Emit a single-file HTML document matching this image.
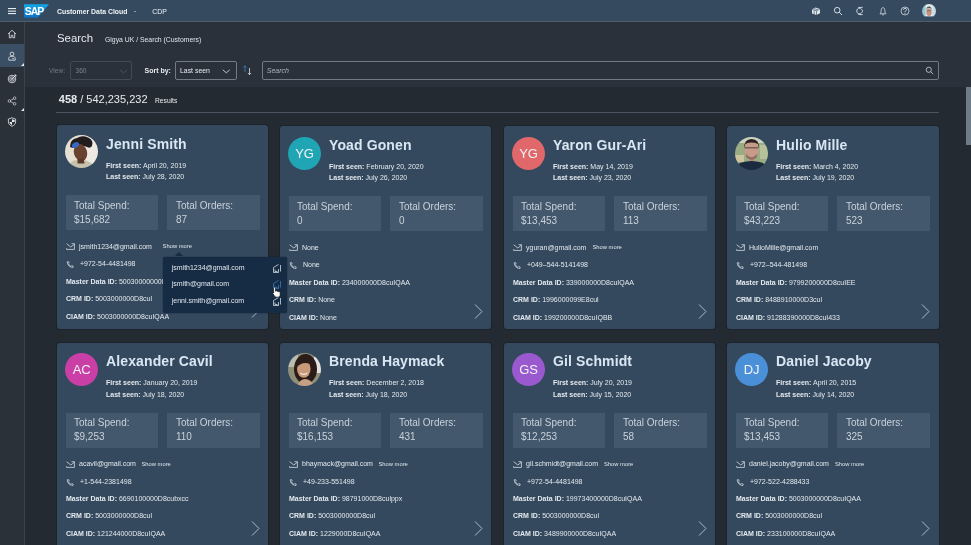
<!DOCTYPE html>
<html><head><meta charset="utf-8"><style>
html,body{margin:0;padding:0;width:971px;height:545px;overflow:hidden;background:#242a31;font-family:"Liberation Sans", sans-serif;}
.t{position:absolute;white-space:nowrap;font-family:"Liberation Sans", sans-serif;}
#root{position:absolute;left:0;top:0;width:971px;height:545px;will-change:transform;}
b{font-weight:700;}
</style></head><body><div id="root">
<div style="position:absolute;left:0px;top:22px;width:971px;height:523px;background:#242a31;"></div>
<div style="position:absolute;left:25px;top:22px;width:946px;height:65px;background:#2a313a;"></div>
<div style="position:absolute;left:0px;top:0px;width:971px;height:21px;background:#354a5f;"></div>
<div style="position:absolute;left:0px;top:21px;width:971px;height:1px;background:#4d5d6c;"></div>
<div style="position:absolute;left:0px;top:22px;width:24px;height:523px;background:#2a3139;"></div>
<div style="position:absolute;left:24px;top:22px;width:1px;height:523px;background:#3a434d;"></div>
<div style="position:absolute;left:0px;top:44px;width:24px;height:23px;background:#3b4f64;"></div>
<svg style="position:absolute;left:8px;top:8px" width="8" height="7" viewBox="0 0 8 7"><rect x="0" y="0" width="8" height="1.1" fill="#e6ebf0"/><rect x="0" y="2.6" width="8" height="1.1" fill="#e6ebf0"/><rect x="0" y="5" width="8" height="1.1" fill="#e6ebf0"/></svg>
<svg style="position:absolute;left:24px;top:4px" width="26" height="14" viewBox="0 0 26 14"><defs><linearGradient id="sg" x1="0" y1="0" x2="0" y2="1"><stop offset="0" stop-color="#12a7ec"/><stop offset="1" stop-color="#0f6fc0"/></linearGradient></defs><polygon points="0,0.2 25,0.2 13.8,13.8 0,13.8" fill="url(#sg)"/><text x="0.8" y="10.8" font-family="Liberation Sans" font-weight="700" font-size="10.5" fill="#fff" letter-spacing="-1.1" transform="scale(1 1)">SAP</text></svg>
<div class="t" style="left:57.0px;top:9.00px;font-size:6.9px;line-height:6.9px;color:#eef2f5;font-weight:700;">Customer Data Cloud</div>
<div style="position:absolute;left:134.3px;top:10.6px;width:0;height:0;border-left:1.6px solid transparent;border-right:1.6px solid transparent;border-top:1.8px solid #e6ebf0"></div>
<div class="t" style="left:152.2px;top:9.00px;font-size:6.9px;line-height:6.9px;color:#eef2f5;font-weight:400;">CDP</div>
<svg style="position:absolute;left:811px;top:5.6px" width="10" height="10" viewBox="0 0 10 10" fill="none" stroke="#e6ebf0" stroke-width="0.9"><path d="M1 3.2 L4.5 1.5 L9 3 V7.2 L5.5 9 L1 7.4 Z" fill="#dfe6ec" stroke="none"/><path d="M1 3.2 L5.5 4.8 L9 3 M5.5 4.8 V9 M3.2 2.4 L7 4 M3.2 4 V8.2" stroke="#354a5f" stroke-width="0.6"/></svg>
<svg style="position:absolute;left:832.5px;top:5.6px" width="10" height="10" viewBox="0 0 10 10" fill="none" stroke="#e6ebf0" stroke-width="0.9"><circle cx="4.2" cy="4.2" r="2.8"/><path d="M6.2 6.2 L9 9"/></svg>
<svg style="position:absolute;left:855px;top:5.6px" width="10" height="10" viewBox="0 0 10 10" fill="none" stroke="#e6ebf0" stroke-width="0.9"><path d="M7.6 1.4 C3.4 0.9 1.8 3.3 1.8 5 C1.8 6.7 3.4 9.1 7.6 8.6"/><path d="M3.2 1.6 C6.6 2.8 7.6 3.9 7.6 5 C7.6 6.1 6.6 7.2 3.2 8.4" stroke-width="0.8"/></svg>
<svg style="position:absolute;left:877.5px;top:5.6px" width="10" height="10" viewBox="0 0 10 10" fill="none" stroke="#e6ebf0" stroke-width="0.9"><path d="M2 7.8 C2.8 7 3.2 6 3.2 4.5 C3.2 2.8 4 1.6 5 1.6 C6 1.6 6.8 2.8 6.8 4.5 C6.8 6 7.2 7 8 7.8 Z" stroke-width="0.75"/><path d="M4.3 8.8 H5.7" stroke-width="0.9"/></svg>
<svg style="position:absolute;left:900px;top:5.6px" width="10" height="10" viewBox="0 0 10 10" fill="none" stroke="#e6ebf0" stroke-width="0.9"><circle cx="5" cy="5" r="4" stroke-width="0.7"/><path d="M3.5 3.9 Q3.5 2.3 5 2.3 Q6.5 2.3 6.5 3.7 Q6.5 4.6 5.5 5 Q5 5.2 5 6.2" stroke-width="0.8"/><circle cx="5" cy="7.5" r="0.5" fill="#e6ebf0" stroke="none"/></svg>
<svg style="position:absolute;left:922px;top:4px" width="14" height="14" viewBox="0 0 14 14"><defs><clipPath id="ha"><circle cx="7" cy="7" r="7"/></clipPath><filter id="hb"><feGaussianBlur stdDeviation="0.45"/></filter></defs><g clip-path="url(#ha)"><g filter="url(#hb)"><rect width="14" height="14" fill="#dde9ee"/><rect x="0" y="0" width="3.5" height="14" fill="#8fc6cf"/><rect x="10.5" y="0" width="3.5" height="14" fill="#c7dbe6"/><ellipse cx="7" cy="8.2" rx="2.6" ry="3.8" fill="#c78f7c"/><path d="M4.2 6 Q4.4 2.4 7 2.4 Q9.6 2.4 9.8 6 L9 4.4 Q7 3.6 5 4.4 Z" fill="#5b5350"/><rect x="4.6" y="6.4" width="4.8" height="0.7" fill="#6f5f5a"/><rect x="3" y="12.4" width="8" height="2" fill="#3b4a5a"/></g></g></svg>
<svg style="position:absolute;left:7px;top:28.799999999999997px" width="10" height="10" viewBox="0 0 10 10" fill="none" stroke="#e6ebf0" stroke-width="0.8"><path d="M1 5 L5 1.3 L9 5 M2.3 4 V8.8 H4.2 V6.3 H5.8 V8.8 H7.7 V4"/></svg>
<svg style="position:absolute;left:7px;top:51.3px" width="10" height="10" viewBox="0 0 10 10" fill="none" stroke="#e6ebf0" stroke-width="0.8"><circle cx="5" cy="3" r="1.9"/><path d="M1.8 9.2 V7.3 C1.8 6 3 5.3 5 5.3 C7 5.3 8.2 6 8.2 7.3 V9.2 Z"/><path d="M5.2 7.7 H7" /></svg>
<svg style="position:absolute;left:7px;top:73.5px" width="10" height="10" viewBox="0 0 10 10" fill="none" stroke="#e6ebf0" stroke-width="0.8"><circle cx="5" cy="5" r="3.8"/><circle cx="5" cy="5" r="2.2"/><circle cx="5" cy="5" r="0.6"/><path d="M5 5 L9 1 M7.5 1 H9 V2.5"/></svg>
<svg style="position:absolute;left:7px;top:95.5px" width="10" height="10" viewBox="0 0 10 10" fill="none" stroke="#e6ebf0" stroke-width="0.8"><circle cx="2.4" cy="5" r="1.3" stroke-width="0.65"/><circle cx="7.6" cy="2.2" r="1.3" stroke-width="0.65"/><circle cx="7.6" cy="7.8" r="1.3" stroke-width="0.65"/><path d="M3.5 4.4 L6.5 2.8 M3.5 5.6 L6.5 7.2" stroke-width="0.65"/></svg>
<svg style="position:absolute;left:7px;top:117px" width="10" height="10" viewBox="0 0 10 10" fill="none" stroke="#e6ebf0" stroke-width="0.8"><path d="M5 0.8 L8.6 2 V5 C8.6 7 7 8.5 5 9.3 C3 8.5 1.4 7 1.4 5 V2 Z"/><path d="M5 2.2 L7.6 3 V5 H5 Z M5 5 V8 C3.8 7.5 2.8 6.5 2.5 5 H5 Z" fill="#e6ebf0" stroke="none"/></svg>
<div style="position:absolute;left:21px;top:63px;width:0;height:0;border-left:3px solid transparent;border-bottom:3px solid #e6ebf0"></div>
<div style="position:absolute;left:21px;top:108px;width:0;height:0;border-left:3px solid transparent;border-bottom:3px solid #e6ebf0"></div>
<div class="t" style="left:57.0px;top:33.00px;font-size:11.4px;line-height:11.4px;color:#e6ebf0;font-weight:400;">Search</div>
<div class="t" style="left:105.0px;top:37.00px;font-size:6.85px;line-height:6.85px;color:#dfe5ea;font-weight:400;">Gigya UK / Search (Customers)</div>
<div class="t" style="left:49.0px;top:68.00px;font-size:6.6px;line-height:6.6px;color:#6f7a85;font-weight:400;">View:</div>
<div style="position:absolute;left:70px;top:61px;width:62px;height:19px;box-sizing:border-box;border:1px solid #434b54;border-radius:2px;"></div>
<div class="t" style="left:75.5px;top:68.00px;font-size:6.6px;line-height:6.6px;color:#7a838c;font-weight:400;">360</div>
<svg style="position:absolute;left:119px;top:68.5px" width="9" height="5" viewBox="0 0 9 5"><path d="M1 1 L4.5 4 L8 1" fill="none" stroke="#505a64" stroke-width="0.8"/></svg>
<div class="t" style="left:144.5px;top:67.00px;font-size:7px;line-height:7px;color:#e6ebf0;font-weight:400;"><b>Sort by:</b></div>
<div style="position:absolute;left:175px;top:61px;width:62px;height:19px;box-sizing:border-box;border:1px solid #717b85;border-radius:2px;"></div>
<div class="t" style="left:180.0px;top:68.00px;font-size:6.9px;line-height:6.9px;color:#e6ebf0;font-weight:400;">Last seen</div>
<svg style="position:absolute;left:222px;top:68.8px" width="9" height="5" viewBox="0 0 9 5"><path d="M0.8 0.8 L4.3 3.8 L7.8 0.8" fill="none" stroke="#e6ebf0" stroke-width="0.8"/></svg>
<svg style="position:absolute;left:241px;top:64px" width="12" height="12" viewBox="0 0 12 12" fill="none" stroke-width="0.75"><path d="M4 8 V1.8 M2.4 3.4 L4 1.8 L5.6 3.4" stroke="#3f86d6"/><path d="M8.5 4 V10.6 M6.9 9 L8.5 10.6 L10.1 9" stroke="#e6ebf0"/></svg>
<div style="position:absolute;left:262px;top:61px;width:677px;height:19px;box-sizing:border-box;border:1px solid #717b85;border-radius:2px;"></div>
<div class="t" style="left:266.8px;top:67.00px;font-size:7px;line-height:7px;color:#aab3bb;font-weight:400;"><i>Search</i></div>
<svg style="position:absolute;left:925px;top:65.8px" width="9" height="9" viewBox="0 0 9 9" fill="none" stroke="#c9d1d8" stroke-width="0.8"><circle cx="3.8" cy="3.8" r="2.6"/><path d="M5.7 5.7 L8.2 8.2"/></svg>
<div class="t" style="left:58.8px;top:94.00px;font-size:11px;line-height:11px;color:#e6ebf0;font-weight:400;"><b>458</b> / 542,235,232</div>
<div class="t" style="left:155.0px;top:98.00px;font-size:6.7px;line-height:6.7px;color:#e6ebf0;font-weight:400;">Results</div>
<div style="position:absolute;left:56px;top:112px;width:883px;height:1px;background:#4a5561;"></div>
<div style="position:absolute;left:966px;top:87px;width:5px;height:58px;background:#6e7b88;"></div>
<div style="position:absolute;left:57px;top:125px;width:211px;height:204px;background:#34495e;border-radius:3px;box-shadow:0 0 0 1px rgba(22,30,38,0.55);"></div>
<svg style="position:absolute;left:65px;top:135px" width="33" height="33" viewBox="0 0 33 33"><defs><clipPath id="cf65135"><circle cx="16.5" cy="16.5" r="16.5"/></clipPath><filter id="f65135" x="-10%" y="-10%" width="120%" height="120%"><feGaussianBlur stdDeviation="0.7"/></filter></defs><g clip-path="url(#cf65135)"><g filter="url(#f65135)"><rect width="33" height="33" fill="#e6e0d4"/><rect x="21" y="0" width="12" height="33" fill="#eeeae3"/><path d="M5 12 Q5 4 12 3 Q17 0 23 2.5 Q29 5 27 11 Q25 14 22 12 Q18 10 14 12 Q9 14 5 12 Z" fill="#231c1a"/><path d="M2 33 Q5 25 12 25 Q20 23.5 28 29 L29 33 Z" fill="#c6c2ab"/><ellipse cx="15.5" cy="17.5" rx="6.6" ry="8.6" transform="rotate(-15 15.5 17.5)" fill="#6b412d"/><path d="M12.5 24 L18.5 23 L19.5 28.5 L12.5 28.5 Z" fill="#5d3828"/><ellipse cx="10.5" cy="10" rx="3.8" ry="2.6" transform="rotate(-30 10.5 10)" fill="#3466c8"/></g></g></svg>
<div class="t" style="left:106.0px;top:137.00px;font-size:14px;line-height:14px;color:#d9e7f4;font-weight:700;letter-spacing:0.12px;">Jenni Smith</div>
<div class="t" style="left:106.0px;top:162.00px;font-size:7px;line-height:7px;color:#e4e9ee;font-weight:400;"><b>First seen:</b> April 20, 2019</div>
<div class="t" style="left:106.0px;top:173.00px;font-size:7px;line-height:7px;color:#e4e9ee;font-weight:400;"><b>Last seen:</b> July 28, 2020</div>
<div style="position:absolute;left:66px;top:195px;width:92px;height:35px;background:#43586d;"></div>
<div style="position:absolute;left:167px;top:195px;width:93px;height:35px;background:#43586d;"></div>
<div class="t" style="left:74.3px;top:201.00px;font-size:10.4px;line-height:10.4px;color:#c9d2db;font-weight:400;transform:scaleX(0.96);transform-origin:0 0;">Total Spend:</div>
<div class="t" style="left:74.3px;top:215.00px;font-size:10.4px;line-height:10.4px;color:#c9d2db;font-weight:400;transform:scaleX(0.96);transform-origin:0 0;">$15,682</div>
<div class="t" style="left:175.5px;top:201.00px;font-size:10.4px;line-height:10.4px;color:#c9d2db;font-weight:400;transform:scaleX(0.96);transform-origin:0 0;">Total Orders:</div>
<div class="t" style="left:175.5px;top:215.00px;font-size:10.4px;line-height:10.4px;color:#c9d2db;font-weight:400;transform:scaleX(0.96);transform-origin:0 0;">87</div>
<svg style="position:absolute;left:66px;top:243.3px" width="9" height="7" viewBox="0 0 9 7" fill="none" stroke="#dfe6ec" stroke-width="0.75"><path d="M0.6 0.7 L4.8 4 L8.4 1.2 M5.5 0.7 H8.4 V6.4 H0.6 V5.2"/></svg>
<div class="t" style="left:79.0px;top:243.00px;font-size:7px;line-height:7px;color:#e4e9ee;font-weight:400;">jsmith1234@gmail.com</div>
<svg style="position:absolute;left:66px;top:260.8px" width="8" height="7" viewBox="0 0 8 7" fill="none" stroke="#dfe6ec" stroke-width="0.7"><path d="M1.2 0.8 L2.6 0.6 L3.2 2.2 L2.4 2.9 C2.9 4 3.8 4.9 4.9 5.3 L5.7 4.5 L7.2 5.1 L7 6.5 C3.8 6.5 1.2 4 1.2 0.8 Z"/></svg>
<div class="t" style="left:80.0px;top:260.00px;font-size:7px;line-height:7px;color:#e4e9ee;font-weight:400;">+972-54-4481498</div>
<div class="t" style="left:66.0px;top:278.00px;font-size:7px;line-height:7px;color:#e4e9ee;font-weight:400;"><b>Master Data ID:</b> 50030000000D8cuIQAA</div>
<div class="t" style="left:66.0px;top:295.00px;font-size:7px;line-height:7px;color:#e4e9ee;font-weight:400;"><b>CRM ID:</b> 5003000000D8cul</div>
<div class="t" style="left:66.0px;top:313.00px;font-size:7px;line-height:7px;color:#e4e9ee;font-weight:400;"><b>CIAM ID:</b> 5003000000D8cuIQAA</div>
<svg style="position:absolute;left:251px;top:303.2px" width="9" height="15" viewBox="0 0 9 15" fill="none" stroke="#a9b9c8" stroke-width="1"><path d="M1 0.5 L8 7.5 L1 14.5"/></svg>
<div style="position:absolute;left:280px;top:126px;width:211px;height:203px;background:#34495e;border-radius:3px;box-shadow:0 0 0 1px rgba(22,30,38,0.55);"></div>
<div style="position:absolute;left:288px;top:137px;width:33px;height:33px;border-radius:50%;background:#1fa5b3;"></div>
<div class="t" style="left:288.0px;top:147.00px;font-size:13px;line-height:13px;color:#f2f4f6;font-weight:400;width:33px;text-align:center;letter-spacing:-0.2px;">YG</div>
<div class="t" style="left:329.0px;top:138.00px;font-size:14px;line-height:14px;color:#d9e7f4;font-weight:700;letter-spacing:0.12px;">Yoad Gonen</div>
<div class="t" style="left:329.0px;top:163.00px;font-size:7px;line-height:7px;color:#e4e9ee;font-weight:400;"><b>First seen:</b> February 20, 2020</div>
<div class="t" style="left:329.0px;top:174.00px;font-size:7px;line-height:7px;color:#e4e9ee;font-weight:400;"><b>Last seen:</b> July 26, 2020</div>
<div style="position:absolute;left:289px;top:196px;width:92px;height:35px;background:#43586d;"></div>
<div style="position:absolute;left:390px;top:196px;width:93px;height:35px;background:#43586d;"></div>
<div class="t" style="left:297.3px;top:202.00px;font-size:10.4px;line-height:10.4px;color:#c9d2db;font-weight:400;transform:scaleX(0.96);transform-origin:0 0;">Total Spend:</div>
<div class="t" style="left:297.3px;top:216.00px;font-size:10.4px;line-height:10.4px;color:#c9d2db;font-weight:400;transform:scaleX(0.96);transform-origin:0 0;">0</div>
<div class="t" style="left:398.5px;top:202.00px;font-size:10.4px;line-height:10.4px;color:#c9d2db;font-weight:400;transform:scaleX(0.96);transform-origin:0 0;">Total Orders:</div>
<div class="t" style="left:398.5px;top:216.00px;font-size:10.4px;line-height:10.4px;color:#c9d2db;font-weight:400;transform:scaleX(0.96);transform-origin:0 0;">0</div>
<svg style="position:absolute;left:289px;top:244.3px" width="9" height="7" viewBox="0 0 9 7" fill="none" stroke="#dfe6ec" stroke-width="0.75"><path d="M0.6 0.7 L4.8 4 L8.4 1.2 M5.5 0.7 H8.4 V6.4 H0.6 V5.2"/></svg>
<div class="t" style="left:302.0px;top:244.00px;font-size:7px;line-height:7px;color:#e4e9ee;font-weight:400;">None</div>
<svg style="position:absolute;left:289px;top:261.8px" width="8" height="7" viewBox="0 0 8 7" fill="none" stroke="#dfe6ec" stroke-width="0.7"><path d="M1.2 0.8 L2.6 0.6 L3.2 2.2 L2.4 2.9 C2.9 4 3.8 4.9 4.9 5.3 L5.7 4.5 L7.2 5.1 L7 6.5 C3.8 6.5 1.2 4 1.2 0.8 Z"/></svg>
<div class="t" style="left:303.0px;top:261.00px;font-size:7px;line-height:7px;color:#e4e9ee;font-weight:400;">None</div>
<div class="t" style="left:289.0px;top:279.00px;font-size:7px;line-height:7px;color:#e4e9ee;font-weight:400;"><b>Master Data ID:</b> 234000000D8cuIQAA</div>
<div class="t" style="left:289.0px;top:296.00px;font-size:7px;line-height:7px;color:#e4e9ee;font-weight:400;"><b>CRM ID:</b> None</div>
<div class="t" style="left:289.0px;top:314.00px;font-size:7px;line-height:7px;color:#e4e9ee;font-weight:400;"><b>CIAM ID:</b> None</div>
<svg style="position:absolute;left:474px;top:304.2px" width="9" height="15" viewBox="0 0 9 15" fill="none" stroke="#a9b9c8" stroke-width="1"><path d="M1 0.5 L8 7.5 L1 14.5"/></svg>
<div style="position:absolute;left:504px;top:126px;width:211px;height:203px;background:#34495e;border-radius:3px;box-shadow:0 0 0 1px rgba(22,30,38,0.55);"></div>
<div style="position:absolute;left:512px;top:137px;width:33px;height:33px;border-radius:50%;background:#e0686a;"></div>
<div class="t" style="left:512.0px;top:147.00px;font-size:13px;line-height:13px;color:#f2f4f6;font-weight:400;width:33px;text-align:center;letter-spacing:-0.2px;">YG</div>
<div class="t" style="left:553.0px;top:138.00px;font-size:14px;line-height:14px;color:#d9e7f4;font-weight:700;letter-spacing:0.12px;">Yaron Gur-Ari</div>
<div class="t" style="left:553.0px;top:163.00px;font-size:7px;line-height:7px;color:#e4e9ee;font-weight:400;"><b>First seen:</b> May 14, 2019</div>
<div class="t" style="left:553.0px;top:174.00px;font-size:7px;line-height:7px;color:#e4e9ee;font-weight:400;"><b>Last seen:</b> July 23, 2020</div>
<div style="position:absolute;left:513px;top:196px;width:92px;height:35px;background:#43586d;"></div>
<div style="position:absolute;left:614px;top:196px;width:93px;height:35px;background:#43586d;"></div>
<div class="t" style="left:521.3px;top:202.00px;font-size:10.4px;line-height:10.4px;color:#c9d2db;font-weight:400;transform:scaleX(0.96);transform-origin:0 0;">Total Spend:</div>
<div class="t" style="left:521.3px;top:216.00px;font-size:10.4px;line-height:10.4px;color:#c9d2db;font-weight:400;transform:scaleX(0.96);transform-origin:0 0;">$13,453</div>
<div class="t" style="left:622.5px;top:202.00px;font-size:10.4px;line-height:10.4px;color:#c9d2db;font-weight:400;transform:scaleX(0.96);transform-origin:0 0;">Total Orders:</div>
<div class="t" style="left:622.5px;top:216.00px;font-size:10.4px;line-height:10.4px;color:#c9d2db;font-weight:400;transform:scaleX(0.96);transform-origin:0 0;">113</div>
<svg style="position:absolute;left:513px;top:244.3px" width="9" height="7" viewBox="0 0 9 7" fill="none" stroke="#dfe6ec" stroke-width="0.75"><path d="M0.6 0.7 L4.8 4 L8.4 1.2 M5.5 0.7 H8.4 V6.4 H0.6 V5.2"/></svg>
<div class="t" style="left:526.0px;top:244.00px;font-size:7px;line-height:7px;color:#e4e9ee;font-weight:400;">yguran@gmail.com</div>
<svg style="position:absolute;left:513px;top:261.8px" width="8" height="7" viewBox="0 0 8 7" fill="none" stroke="#dfe6ec" stroke-width="0.7"><path d="M1.2 0.8 L2.6 0.6 L3.2 2.2 L2.4 2.9 C2.9 4 3.8 4.9 4.9 5.3 L5.7 4.5 L7.2 5.1 L7 6.5 C3.8 6.5 1.2 4 1.2 0.8 Z"/></svg>
<div class="t" style="left:527.0px;top:261.00px;font-size:7px;line-height:7px;color:#e4e9ee;font-weight:400;">+049–544-5141498</div>
<div class="t" style="left:513.0px;top:279.00px;font-size:7px;line-height:7px;color:#e4e9ee;font-weight:400;"><b>Master Data ID:</b> 339000000D8cuIQAA</div>
<div class="t" style="left:513.0px;top:296.00px;font-size:7px;line-height:7px;color:#e4e9ee;font-weight:400;"><b>CRM ID:</b> 1996000099E8cul</div>
<div class="t" style="left:513.0px;top:314.00px;font-size:7px;line-height:7px;color:#e4e9ee;font-weight:400;"><b>CIAM ID:</b> 199200000D8cuIQBB</div>
<svg style="position:absolute;left:698px;top:304.2px" width="9" height="15" viewBox="0 0 9 15" fill="none" stroke="#a9b9c8" stroke-width="1"><path d="M1 0.5 L8 7.5 L1 14.5"/></svg>
<div style="position:absolute;left:727px;top:126px;width:212px;height:203px;background:#34495e;border-radius:3px;box-shadow:0 0 0 1px rgba(22,30,38,0.55);"></div>
<svg style="position:absolute;left:735px;top:136.5px" width="33" height="33" viewBox="0 0 33 33"><defs><clipPath id="cf735136_5"><circle cx="16.5" cy="16.5" r="16.5"/></clipPath><filter id="f735136_5" x="-10%" y="-10%" width="120%" height="120%"><feGaussianBlur stdDeviation="0.7"/></filter></defs><g clip-path="url(#cf735136_5)"><g filter="url(#f735136_5)"><rect width="33" height="33" fill="#9aac84"/><rect x="0" y="0" width="33" height="6" fill="#cdd2c0"/><rect x="25" y="8" width="8" height="14" fill="#b5c29a"/><rect x="0" y="18" width="9" height="7" fill="#cdc59e"/><rect x="14" y="19" width="5.5" height="6" fill="#b88a78"/><ellipse cx="16.6" cy="12.8" rx="7.3" ry="9.6" fill="#c89a88"/><path d="M9.2 12 Q8.6 2 16.6 2 Q24.6 2 24 12 L23 7 Q16.6 4.2 10.2 7 Z" fill="#2b2320"/><rect x="10" y="10.2" width="13.2" height="1.2" fill="#4a3f3c" opacity="0.8"/><path d="M11 16.5 Q16.6 24 22.2 16.5 L21.8 20.5 Q16.6 24.8 11.4 20.5 Z" fill="#5a4038" opacity="0.5"/><path d="M0 33 L0 29 Q5 24.5 16.6 24 Q28 24.5 33 29 L33 33 Z" fill="#1f2b40"/></g></g></svg>
<div class="t" style="left:776.0px;top:138.00px;font-size:14px;line-height:14px;color:#d9e7f4;font-weight:700;letter-spacing:0.12px;">Hulio Mille</div>
<div class="t" style="left:776.0px;top:163.00px;font-size:7px;line-height:7px;color:#e4e9ee;font-weight:400;"><b>First seen:</b> March 4, 2020</div>
<div class="t" style="left:776.0px;top:174.00px;font-size:7px;line-height:7px;color:#e4e9ee;font-weight:400;"><b>Last seen:</b> July 19, 2020</div>
<div style="position:absolute;left:736px;top:196px;width:92px;height:35px;background:#43586d;"></div>
<div style="position:absolute;left:837px;top:196px;width:93px;height:35px;background:#43586d;"></div>
<div class="t" style="left:744.3px;top:202.00px;font-size:10.4px;line-height:10.4px;color:#c9d2db;font-weight:400;transform:scaleX(0.96);transform-origin:0 0;">Total Spend:</div>
<div class="t" style="left:744.3px;top:216.00px;font-size:10.4px;line-height:10.4px;color:#c9d2db;font-weight:400;transform:scaleX(0.96);transform-origin:0 0;">$43,223</div>
<div class="t" style="left:845.5px;top:202.00px;font-size:10.4px;line-height:10.4px;color:#c9d2db;font-weight:400;transform:scaleX(0.96);transform-origin:0 0;">Total Orders:</div>
<div class="t" style="left:845.5px;top:216.00px;font-size:10.4px;line-height:10.4px;color:#c9d2db;font-weight:400;transform:scaleX(0.96);transform-origin:0 0;">523</div>
<svg style="position:absolute;left:736px;top:244.3px" width="9" height="7" viewBox="0 0 9 7" fill="none" stroke="#dfe6ec" stroke-width="0.75"><path d="M0.6 0.7 L4.8 4 L8.4 1.2 M5.5 0.7 H8.4 V6.4 H0.6 V5.2"/></svg>
<div class="t" style="left:749.0px;top:244.00px;font-size:7px;line-height:7px;color:#e4e9ee;font-weight:400;">HulioMille@gmail.com</div>
<svg style="position:absolute;left:736px;top:261.8px" width="8" height="7" viewBox="0 0 8 7" fill="none" stroke="#dfe6ec" stroke-width="0.7"><path d="M1.2 0.8 L2.6 0.6 L3.2 2.2 L2.4 2.9 C2.9 4 3.8 4.9 4.9 5.3 L5.7 4.5 L7.2 5.1 L7 6.5 C3.8 6.5 1.2 4 1.2 0.8 Z"/></svg>
<div class="t" style="left:750.0px;top:261.00px;font-size:7px;line-height:7px;color:#e4e9ee;font-weight:400;">+972–544-481498</div>
<div class="t" style="left:736.0px;top:279.00px;font-size:7px;line-height:7px;color:#e4e9ee;font-weight:400;"><b>Master Data ID:</b> 9799200000D8cuIEE</div>
<div class="t" style="left:736.0px;top:296.00px;font-size:7px;line-height:7px;color:#e4e9ee;font-weight:400;"><b>CRM ID:</b> 8488910000D3cul</div>
<div class="t" style="left:736.0px;top:314.00px;font-size:7px;line-height:7px;color:#e4e9ee;font-weight:400;"><b>CIAM ID:</b> 91288390000D8cuI433</div>
<svg style="position:absolute;left:921px;top:304.2px" width="9" height="15" viewBox="0 0 9 15" fill="none" stroke="#a9b9c8" stroke-width="1"><path d="M1 0.5 L8 7.5 L1 14.5"/></svg>
<div style="position:absolute;left:57px;top:343px;width:211px;height:210px;background:#34495e;border-radius:3px;box-shadow:0 0 0 1px rgba(22,30,38,0.55);"></div>
<div style="position:absolute;left:65px;top:353px;width:33px;height:33px;border-radius:50%;background:#c93fa6;"></div>
<div class="t" style="left:65.0px;top:363.00px;font-size:13px;line-height:13px;color:#f2f4f6;font-weight:400;width:33px;text-align:center;letter-spacing:-0.2px;">AC</div>
<div class="t" style="left:106.0px;top:354.00px;font-size:14px;line-height:14px;color:#d9e7f4;font-weight:700;letter-spacing:0.12px;">Alexander Cavil</div>
<div class="t" style="left:106.0px;top:379.00px;font-size:7px;line-height:7px;color:#e4e9ee;font-weight:400;"><b>First seen:</b> January 20, 2019</div>
<div class="t" style="left:106.0px;top:391.00px;font-size:7px;line-height:7px;color:#e4e9ee;font-weight:400;"><b>Last seen:</b> July 18, 2020</div>
<div style="position:absolute;left:66px;top:413px;width:92px;height:35px;background:#43586d;"></div>
<div style="position:absolute;left:167px;top:413px;width:93px;height:35px;background:#43586d;"></div>
<div class="t" style="left:74.3px;top:418.00px;font-size:10.4px;line-height:10.4px;color:#c9d2db;font-weight:400;transform:scaleX(0.96);transform-origin:0 0;">Total Spend:</div>
<div class="t" style="left:74.3px;top:432.00px;font-size:10.4px;line-height:10.4px;color:#c9d2db;font-weight:400;transform:scaleX(0.96);transform-origin:0 0;">$9,253</div>
<div class="t" style="left:175.5px;top:418.00px;font-size:10.4px;line-height:10.4px;color:#c9d2db;font-weight:400;transform:scaleX(0.96);transform-origin:0 0;">Total Orders:</div>
<div class="t" style="left:175.5px;top:432.00px;font-size:10.4px;line-height:10.4px;color:#c9d2db;font-weight:400;transform:scaleX(0.96);transform-origin:0 0;">110</div>
<svg style="position:absolute;left:66px;top:460.6px" width="9" height="7" viewBox="0 0 9 7" fill="none" stroke="#dfe6ec" stroke-width="0.75"><path d="M0.6 0.7 L4.8 4 L8.4 1.2 M5.5 0.7 H8.4 V6.4 H0.6 V5.2"/></svg>
<div class="t" style="left:79.0px;top:460.00px;font-size:7px;line-height:7px;color:#e4e9ee;font-weight:400;">acavil@gmail.com</div>
<svg style="position:absolute;left:66px;top:478.8px" width="8" height="7" viewBox="0 0 8 7" fill="none" stroke="#dfe6ec" stroke-width="0.7"><path d="M1.2 0.8 L2.6 0.6 L3.2 2.2 L2.4 2.9 C2.9 4 3.8 4.9 4.9 5.3 L5.7 4.5 L7.2 5.1 L7 6.5 C3.8 6.5 1.2 4 1.2 0.8 Z"/></svg>
<div class="t" style="left:80.0px;top:478.00px;font-size:7px;line-height:7px;color:#e4e9ee;font-weight:400;">+1-544-2381498</div>
<div class="t" style="left:66.0px;top:495.00px;font-size:7px;line-height:7px;color:#e4e9ee;font-weight:400;"><b>Master Data ID:</b> 6690100000D8cubxcc</div>
<div class="t" style="left:66.0px;top:512.00px;font-size:7px;line-height:7px;color:#e4e9ee;font-weight:400;"><b>CRM ID:</b> 5003000000D8cul</div>
<div class="t" style="left:66.0px;top:530.00px;font-size:7px;line-height:7px;color:#e4e9ee;font-weight:400;"><b>CIAM ID:</b> 121244000D8cuIQAA</div>
<svg style="position:absolute;left:251px;top:520.5px" width="9" height="15" viewBox="0 0 9 15" fill="none" stroke="#a9b9c8" stroke-width="1"><path d="M1 0.5 L8 7.5 L1 14.5"/></svg>
<div style="position:absolute;left:280px;top:343px;width:211px;height:210px;background:#34495e;border-radius:3px;box-shadow:0 0 0 1px rgba(22,30,38,0.55);"></div>
<svg style="position:absolute;left:288px;top:353px" width="33" height="33" viewBox="0 0 33 33"><defs><clipPath id="cf288353"><circle cx="16.5" cy="16.5" r="16.5"/></clipPath><filter id="f288353" x="-10%" y="-10%" width="120%" height="120%"><feGaussianBlur stdDeviation="0.7"/></filter></defs><g clip-path="url(#cf288353)"><g filter="url(#f288353)"><rect width="33" height="33" fill="#8e8f79"/><rect x="0" y="0" width="10" height="14" fill="#b9bcae"/><rect x="26" y="4" width="7" height="16" fill="#e4e2dc"/><ellipse cx="17.5" cy="16" rx="11.5" ry="15" fill="#2a1b15"/><path d="M9 33 Q12 26 17 26 Q23 26 26 33 Z" fill="#c8a084"/><ellipse cx="15.8" cy="15.8" rx="6.8" ry="9" fill="#c89a7a"/><path d="M8.8 12 Q12 4 19 4.5 Q24 6 22 11 Q15 8 8.8 14 Z" fill="#2a1b15"/><path d="M12.5 20 Q15.8 22.8 19.2 20" stroke="#f3e6dc" stroke-width="1.3" fill="none"/></g></g></svg>
<div class="t" style="left:329.0px;top:354.00px;font-size:14px;line-height:14px;color:#d9e7f4;font-weight:700;letter-spacing:0.12px;">Brenda Haymack</div>
<div class="t" style="left:329.0px;top:379.00px;font-size:7px;line-height:7px;color:#e4e9ee;font-weight:400;"><b>First seen:</b> December 2, 2018</div>
<div class="t" style="left:329.0px;top:391.00px;font-size:7px;line-height:7px;color:#e4e9ee;font-weight:400;"><b>Last seen:</b> July 18, 2020</div>
<div style="position:absolute;left:289px;top:413px;width:92px;height:35px;background:#43586d;"></div>
<div style="position:absolute;left:390px;top:413px;width:93px;height:35px;background:#43586d;"></div>
<div class="t" style="left:297.3px;top:418.00px;font-size:10.4px;line-height:10.4px;color:#c9d2db;font-weight:400;transform:scaleX(0.96);transform-origin:0 0;">Total Spend:</div>
<div class="t" style="left:297.3px;top:432.00px;font-size:10.4px;line-height:10.4px;color:#c9d2db;font-weight:400;transform:scaleX(0.96);transform-origin:0 0;">$16,153</div>
<div class="t" style="left:398.5px;top:418.00px;font-size:10.4px;line-height:10.4px;color:#c9d2db;font-weight:400;transform:scaleX(0.96);transform-origin:0 0;">Total Orders:</div>
<div class="t" style="left:398.5px;top:432.00px;font-size:10.4px;line-height:10.4px;color:#c9d2db;font-weight:400;transform:scaleX(0.96);transform-origin:0 0;">431</div>
<svg style="position:absolute;left:289px;top:460.6px" width="9" height="7" viewBox="0 0 9 7" fill="none" stroke="#dfe6ec" stroke-width="0.75"><path d="M0.6 0.7 L4.8 4 L8.4 1.2 M5.5 0.7 H8.4 V6.4 H0.6 V5.2"/></svg>
<div class="t" style="left:302.0px;top:460.00px;font-size:7px;line-height:7px;color:#e4e9ee;font-weight:400;">bhaymack@gmail.com</div>
<svg style="position:absolute;left:289px;top:478.8px" width="8" height="7" viewBox="0 0 8 7" fill="none" stroke="#dfe6ec" stroke-width="0.7"><path d="M1.2 0.8 L2.6 0.6 L3.2 2.2 L2.4 2.9 C2.9 4 3.8 4.9 4.9 5.3 L5.7 4.5 L7.2 5.1 L7 6.5 C3.8 6.5 1.2 4 1.2 0.8 Z"/></svg>
<div class="t" style="left:303.0px;top:478.00px;font-size:7px;line-height:7px;color:#e4e9ee;font-weight:400;">+49-233-551498</div>
<div class="t" style="left:289.0px;top:495.00px;font-size:7px;line-height:7px;color:#e4e9ee;font-weight:400;"><b>Master Data ID:</b> 98791000D8culppx</div>
<div class="t" style="left:289.0px;top:512.00px;font-size:7px;line-height:7px;color:#e4e9ee;font-weight:400;"><b>CRM ID:</b> 5003000000D8cul</div>
<div class="t" style="left:289.0px;top:530.00px;font-size:7px;line-height:7px;color:#e4e9ee;font-weight:400;"><b>CIAM ID:</b> 1229000D8cuIQAA</div>
<svg style="position:absolute;left:474px;top:520.5px" width="9" height="15" viewBox="0 0 9 15" fill="none" stroke="#a9b9c8" stroke-width="1"><path d="M1 0.5 L8 7.5 L1 14.5"/></svg>
<div style="position:absolute;left:504px;top:343px;width:211px;height:210px;background:#34495e;border-radius:3px;box-shadow:0 0 0 1px rgba(22,30,38,0.55);"></div>
<div style="position:absolute;left:512px;top:353px;width:33px;height:33px;border-radius:50%;background:#9b59d0;"></div>
<div class="t" style="left:512.0px;top:363.00px;font-size:13px;line-height:13px;color:#f2f4f6;font-weight:400;width:33px;text-align:center;letter-spacing:-0.2px;">GS</div>
<div class="t" style="left:553.0px;top:354.00px;font-size:14px;line-height:14px;color:#d9e7f4;font-weight:700;letter-spacing:0.12px;">Gil Schmidt</div>
<div class="t" style="left:553.0px;top:379.00px;font-size:7px;line-height:7px;color:#e4e9ee;font-weight:400;"><b>First seen:</b> July 20, 2019</div>
<div class="t" style="left:553.0px;top:391.00px;font-size:7px;line-height:7px;color:#e4e9ee;font-weight:400;"><b>Last seen:</b> July 15, 2020</div>
<div style="position:absolute;left:513px;top:413px;width:92px;height:35px;background:#43586d;"></div>
<div style="position:absolute;left:614px;top:413px;width:93px;height:35px;background:#43586d;"></div>
<div class="t" style="left:521.3px;top:418.00px;font-size:10.4px;line-height:10.4px;color:#c9d2db;font-weight:400;transform:scaleX(0.96);transform-origin:0 0;">Total Spend:</div>
<div class="t" style="left:521.3px;top:432.00px;font-size:10.4px;line-height:10.4px;color:#c9d2db;font-weight:400;transform:scaleX(0.96);transform-origin:0 0;">$12,253</div>
<div class="t" style="left:622.5px;top:418.00px;font-size:10.4px;line-height:10.4px;color:#c9d2db;font-weight:400;transform:scaleX(0.96);transform-origin:0 0;">Total Orders:</div>
<div class="t" style="left:622.5px;top:432.00px;font-size:10.4px;line-height:10.4px;color:#c9d2db;font-weight:400;transform:scaleX(0.96);transform-origin:0 0;">58</div>
<svg style="position:absolute;left:513px;top:460.6px" width="9" height="7" viewBox="0 0 9 7" fill="none" stroke="#dfe6ec" stroke-width="0.75"><path d="M0.6 0.7 L4.8 4 L8.4 1.2 M5.5 0.7 H8.4 V6.4 H0.6 V5.2"/></svg>
<div class="t" style="left:526.0px;top:460.00px;font-size:7px;line-height:7px;color:#e4e9ee;font-weight:400;">gil.schmidt@gmail.com</div>
<svg style="position:absolute;left:513px;top:478.8px" width="8" height="7" viewBox="0 0 8 7" fill="none" stroke="#dfe6ec" stroke-width="0.7"><path d="M1.2 0.8 L2.6 0.6 L3.2 2.2 L2.4 2.9 C2.9 4 3.8 4.9 4.9 5.3 L5.7 4.5 L7.2 5.1 L7 6.5 C3.8 6.5 1.2 4 1.2 0.8 Z"/></svg>
<div class="t" style="left:527.0px;top:478.00px;font-size:7px;line-height:7px;color:#e4e9ee;font-weight:400;">+972-54-4481498</div>
<div class="t" style="left:513.0px;top:495.00px;font-size:7px;line-height:7px;color:#e4e9ee;font-weight:400;"><b>Master Data ID:</b> 19973400000D8cuIQAA</div>
<div class="t" style="left:513.0px;top:512.00px;font-size:7px;line-height:7px;color:#e4e9ee;font-weight:400;"><b>CRM ID:</b> 5003000000D8cul</div>
<div class="t" style="left:513.0px;top:530.00px;font-size:7px;line-height:7px;color:#e4e9ee;font-weight:400;"><b>CIAM ID:</b> 3489900000D8cuIQAA</div>
<svg style="position:absolute;left:698px;top:520.5px" width="9" height="15" viewBox="0 0 9 15" fill="none" stroke="#a9b9c8" stroke-width="1"><path d="M1 0.5 L8 7.5 L1 14.5"/></svg>
<div style="position:absolute;left:727px;top:343px;width:212px;height:210px;background:#34495e;border-radius:3px;box-shadow:0 0 0 1px rgba(22,30,38,0.55);"></div>
<div style="position:absolute;left:735px;top:353px;width:33px;height:33px;border-radius:50%;background:#4a90d9;"></div>
<div class="t" style="left:735.0px;top:363.00px;font-size:13px;line-height:13px;color:#f2f4f6;font-weight:400;width:33px;text-align:center;letter-spacing:-0.2px;">DJ</div>
<div class="t" style="left:776.0px;top:354.00px;font-size:14px;line-height:14px;color:#d9e7f4;font-weight:700;letter-spacing:0.12px;">Daniel Jacoby</div>
<div class="t" style="left:776.0px;top:379.00px;font-size:7px;line-height:7px;color:#e4e9ee;font-weight:400;"><b>First seen:</b> April 20, 2015</div>
<div class="t" style="left:776.0px;top:391.00px;font-size:7px;line-height:7px;color:#e4e9ee;font-weight:400;"><b>Last seen:</b> July 14, 2020</div>
<div style="position:absolute;left:736px;top:413px;width:92px;height:35px;background:#43586d;"></div>
<div style="position:absolute;left:837px;top:413px;width:93px;height:35px;background:#43586d;"></div>
<div class="t" style="left:744.3px;top:418.00px;font-size:10.4px;line-height:10.4px;color:#c9d2db;font-weight:400;transform:scaleX(0.96);transform-origin:0 0;">Total Spend:</div>
<div class="t" style="left:744.3px;top:432.00px;font-size:10.4px;line-height:10.4px;color:#c9d2db;font-weight:400;transform:scaleX(0.96);transform-origin:0 0;">$13,453</div>
<div class="t" style="left:845.5px;top:418.00px;font-size:10.4px;line-height:10.4px;color:#c9d2db;font-weight:400;transform:scaleX(0.96);transform-origin:0 0;">Total Orders:</div>
<div class="t" style="left:845.5px;top:432.00px;font-size:10.4px;line-height:10.4px;color:#c9d2db;font-weight:400;transform:scaleX(0.96);transform-origin:0 0;">325</div>
<svg style="position:absolute;left:736px;top:460.6px" width="9" height="7" viewBox="0 0 9 7" fill="none" stroke="#dfe6ec" stroke-width="0.75"><path d="M0.6 0.7 L4.8 4 L8.4 1.2 M5.5 0.7 H8.4 V6.4 H0.6 V5.2"/></svg>
<div class="t" style="left:749.0px;top:460.00px;font-size:7px;line-height:7px;color:#e4e9ee;font-weight:400;">daniel.jacoby@gmail.com</div>
<svg style="position:absolute;left:736px;top:478.8px" width="8" height="7" viewBox="0 0 8 7" fill="none" stroke="#dfe6ec" stroke-width="0.7"><path d="M1.2 0.8 L2.6 0.6 L3.2 2.2 L2.4 2.9 C2.9 4 3.8 4.9 4.9 5.3 L5.7 4.5 L7.2 5.1 L7 6.5 C3.8 6.5 1.2 4 1.2 0.8 Z"/></svg>
<div class="t" style="left:750.0px;top:478.00px;font-size:7px;line-height:7px;color:#e4e9ee;font-weight:400;">+972-522-4288433</div>
<div class="t" style="left:736.0px;top:495.00px;font-size:7px;line-height:7px;color:#e4e9ee;font-weight:400;"><b>Master Data ID:</b> 5003000000D8cuIQAA</div>
<div class="t" style="left:736.0px;top:512.00px;font-size:7px;line-height:7px;color:#e4e9ee;font-weight:400;"><b>CRM ID:</b> 5003000000D8cul</div>
<div class="t" style="left:736.0px;top:530.00px;font-size:7px;line-height:7px;color:#e4e9ee;font-weight:400;"><b>CIAM ID:</b> 233100000D8cuIQAA</div>
<svg style="position:absolute;left:921px;top:520.5px" width="9" height="15" viewBox="0 0 9 15" fill="none" stroke="#a9b9c8" stroke-width="1"><path d="M1 0.5 L8 7.5 L1 14.5"/></svg>
<div class="t" style="left:162.6px;top:244.00px;font-size:5.8px;line-height:5.8px;color:#dfe6ec;font-weight:400;">Show more</div>
<div class="t" style="left:592.5px;top:245.00px;font-size:5.8px;line-height:5.8px;color:#dfe6ec;font-weight:400;">Show more</div>
<div class="t" style="left:141.5px;top:462.00px;font-size:5.8px;line-height:5.8px;color:#dfe6ec;font-weight:400;">Show more</div>
<div class="t" style="left:378.5px;top:462.00px;font-size:5.8px;line-height:5.8px;color:#dfe6ec;font-weight:400;">Show more</div>
<div class="t" style="left:604.0px;top:462.00px;font-size:5.8px;line-height:5.8px;color:#dfe6ec;font-weight:400;">Show more</div>
<div class="t" style="left:835.0px;top:462.00px;font-size:5.8px;line-height:5.8px;color:#dfe6ec;font-weight:400;">Show more</div>
<div style="position:absolute;left:163px;top:256.5px;width:124px;height:56px;background:#162b44;border-radius:2px;box-shadow:0 0 1.5px rgba(0,0,0,0.5);"></div>
<div style="position:absolute;left:175px;top:252px;width:0;height:0;border-left:4.5px solid transparent;border-right:4.5px solid transparent;border-bottom:4.5px solid #162b44"></div>
<div class="t" style="left:171.7px;top:264.00px;font-size:7px;line-height:7px;color:#e4e9ee;font-weight:400;">jsmith1234@gmail.com</div>
<div class="t" style="left:171.7px;top:280.00px;font-size:7px;line-height:7px;color:#e4e9ee;font-weight:400;">jsmith@gmail.com</div>
<div class="t" style="left:171.7px;top:297.00px;font-size:7px;line-height:7px;color:#e4e9ee;font-weight:400;">jenni.smith@gmail.com</div>
<svg style="position:absolute;left:273px;top:263.5px" width="9" height="9" viewBox="0 0 9 9" fill="none" stroke="#dfe6ec" stroke-width="0.75"><path d="M0.5 3.5 L5.5 0.5 M0.5 3.5 V8.5 H5.5 V5 M2 5.5 V7.5 H4.5" /><path d="M7.5 1 V7.5"/></svg>
<svg style="position:absolute;left:273px;top:280px" width="9" height="9" viewBox="0 0 9 9" fill="none" stroke="#3d7cc9" stroke-width="0.75"><path d="M0.5 3.5 L5.5 0.5 M0.5 3.5 V8.5 H5.5 V5 M2 5.5 V7.5 H4.5" /><path d="M7.5 1 V7.5"/></svg>
<svg style="position:absolute;left:273px;top:296.5px" width="9" height="9" viewBox="0 0 9 9" fill="none" stroke="#dfe6ec" stroke-width="0.75"><path d="M0.5 3.5 L5.5 0.5 M0.5 3.5 V8.5 H5.5 V5 M2 5.5 V7.5 H4.5" /><path d="M7.5 1 V7.5"/></svg>
<svg style="position:absolute;left:272px;top:286px" width="12" height="12" viewBox="0 0 12 12"><path d="M2.6 1 C3.2 1 3.6 1.4 3.6 2 V5.2 L4 4.9 C4.5 4.6 5.2 4.8 5.4 5.3 C5.9 5 6.6 5.2 6.8 5.8 C7.3 5.5 8.2 5.9 8.2 6.6 V8.6 C8.2 10.2 7.2 11.2 5.7 11.2 H4.6 C3.6 11.2 3 10.7 2.4 9.9 L0.8 7.4 C0.5 6.9 1.1 6.2 1.8 6.6 L1.6 6.9 V2 C1.6 1.4 2 1 2.6 1 Z" fill="#fff" stroke="#111" stroke-width="0.75"/></svg>
</div></body></html>
